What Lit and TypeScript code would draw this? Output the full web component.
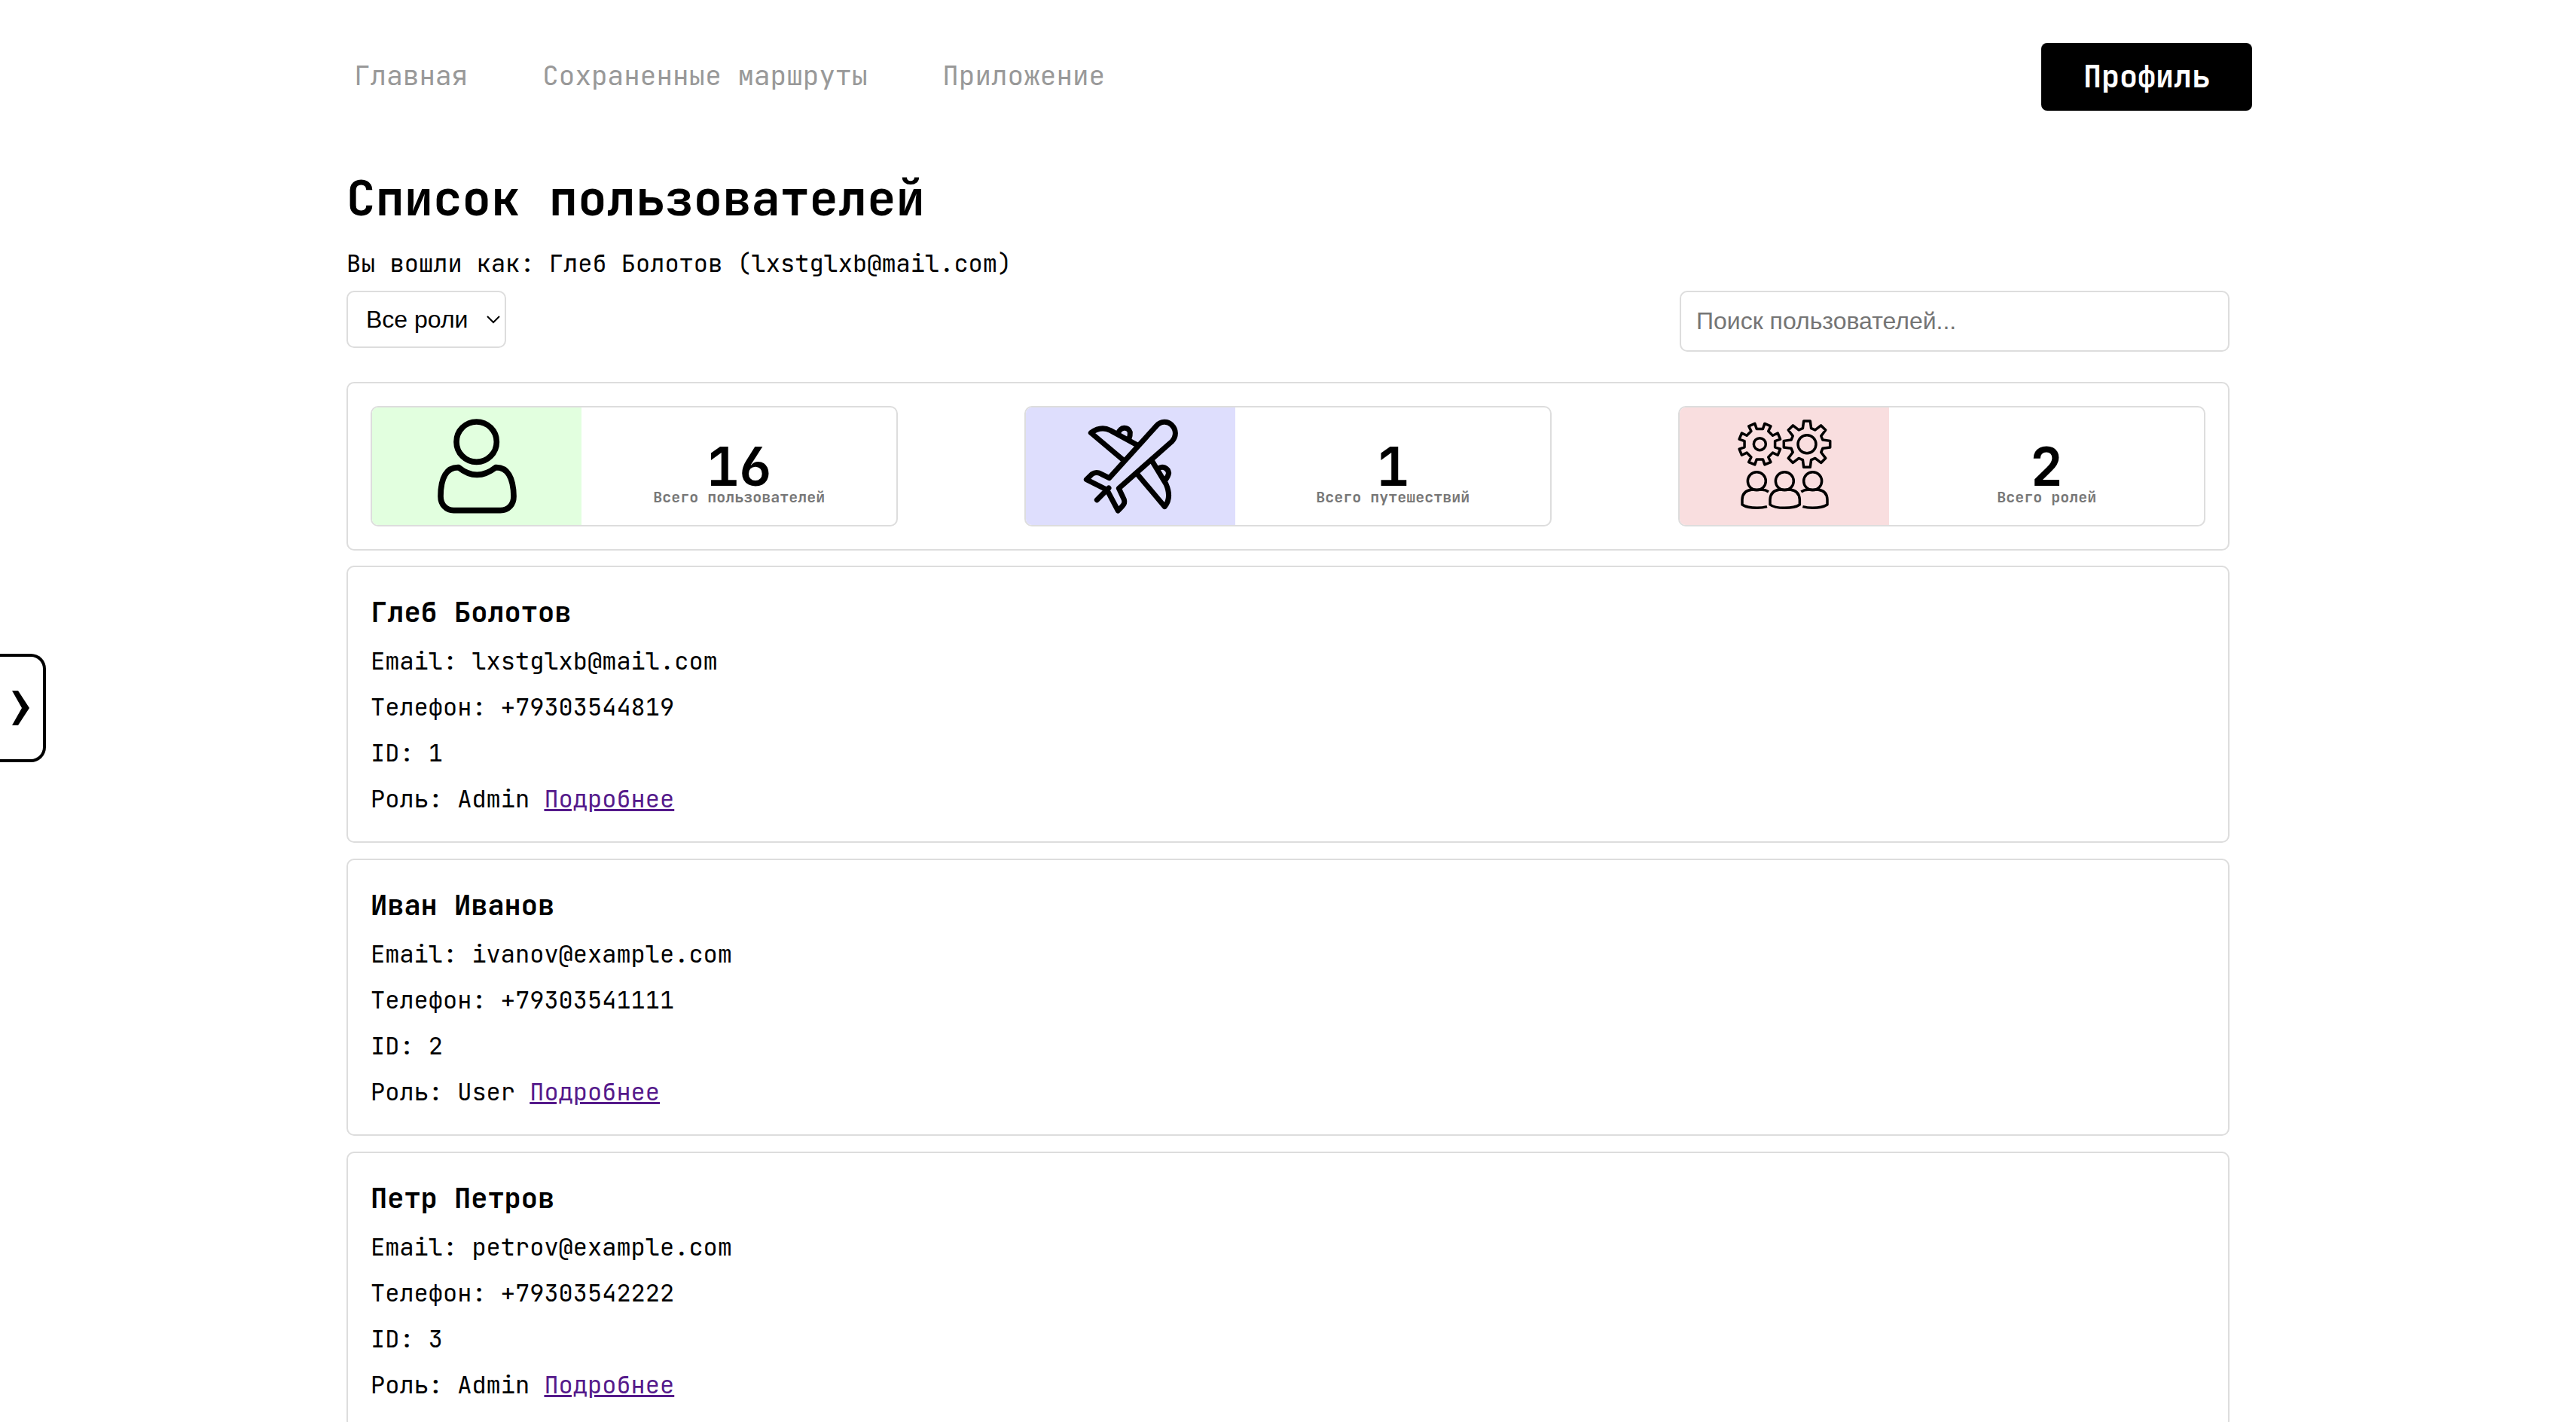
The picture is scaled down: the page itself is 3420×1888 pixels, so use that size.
import { LitElement, html, css, svg } from "lit";
import { customElement, property, state } from "lit/decorators.js";

interface User {
  id: number;
  name: string;
  email: string;
  phone: string;
  role: string;
}

const USERS: User[] = [
  { id: 1, name: "Глеб Болотов", email: "lxstglxb@mail.com", phone: "+79303544819", role: "Admin" },
  { id: 2, name: "Иван Иванов", email: "ivanov@example.com", phone: "+79303541111", role: "User" },
  { id: 3, name: "Петр Петров", email: "petrov@example.com", phone: "+79303542222", role: "Admin" },
];

/** Outline of a cog: each tooth is a trapezoid between the inner and outer radius. */
function gear(
  cx: number,
  cy: number,
  inner: number,
  outer: number,
  baseHalf: number,
  topHalf: number,
  start: number
): string {
  const points: string[] = [];
  const add = (r: number, deg: number) => {
    const a = (deg * Math.PI) / 180;
    points.push(`${(cx + r * Math.sin(a)).toFixed(1)} ${(cy - r * Math.cos(a)).toFixed(1)}`);
  };
  for (let i = 0; i < 8; i++) {
    const mid = start + i * 45;
    add(inner, mid - baseHalf);
    add(outer, mid - topHalf);
    add(outer, mid + topHalf);
    add(inner, mid + baseHalf);
  }
  return `M${points.join("L")}Z`;
}

const personIcon = html`
  <svg viewBox="0 1 408 408" aria-hidden="true">
    <g fill="none" stroke="#000" stroke-width="23" stroke-linejoin="round">
      <circle cx="203" cy="108" r="80"></circle>
      <path
        d="M132 210C84 208 60 250 60 325C60 358 82 381 112 381H298C330 381 351 358 351 325C350 250 326 208 279 210Q204 268 132 210Z"
      ></path>
    </g>
  </svg>
`;

const planeIcon = html`
  <svg viewBox="3 1 408 408" aria-hidden="true">
    <g fill="none" stroke="#000" stroke-width="21" stroke-linejoin="round" stroke-linecap="round">
      <path
        d="M122 252L310 44C328 25 354 24 370 40C390 60 390 86 372 106L160 293L181 338C185 352 182 358 157 382L113 299L31 258L54 236C64 229 76 228 90 236Z"
      ></path>
      <path d="M120 292L73 339"></path>
      <path d="M180 182L49 72C74 54 98 48 126 62L232 120"></path>
      <path d="M158 74C164 48 198 45 205 70C206 82 204 88 200 98"></path>
      <path d="M235 238L343 366C364 340 362 308 348 276L290 180"></path>
      <path d="M318 214C334 202 356 212 359 232C357 246 352 252 344 262"></path>
    </g>
  </svg>
`;

const rolesIcon = html`
  <svg viewBox="3 1 408 408" aria-hidden="true">
    <g fill="none" stroke="#000" stroke-width="10.5" stroke-linejoin="round">
      ${svg`
        <path d=${gear(109, 117, 62, 84, 11, 9, 22.5)}></path>
        <path d=${gear(297, 117, 65, 93, 15, 8, 0)}></path>
      `}
      <circle cx="109" cy="117" r="24"></circle>
      <circle cx="297" cy="117" r="36"></circle>
      <circle cx="97" cy="264" r="36"></circle>
      <circle cx="208" cy="264" r="36"></circle>
      <circle cx="320" cy="264" r="36"></circle>
      <path d="M144 307Q132 299 118 299H76Q40 303 39 338V358Q58 371 98 371Q120 371 138 366"></path>
      <path
        d="M150 358V338Q152 303 186 299H232Q266 303 268 338V358Q250 371 208 371Q166 371 150 358Z"
      ></path>
      <path d="M274 307Q286 299 300 299H342Q377 303 378 338V358Q358 371 320 371Q298 371 280 366"></path>
    </g>
  </svg>
`;

@customElement("stat-card")
export class StatCard extends LitElement {
  @property({ type: Number }) value = 0;
  @property() label = "";
  @property() tone = "green";
  @property({ attribute: false }) icon: unknown = null;

  static styles = css`
    :host {
      display: block;
      flex: 0 1 700px;
    }
    .card {
      display: flex;
      height: 160px;
      box-sizing: border-box;
      border: 2px solid #ddd;
      border-radius: 10px;
      overflow: hidden;
    }
    .picture {
      flex: 0 0 40%;
      display: flex;
      align-items: center;
      justify-content: center;
    }
    .picture svg {
      width: 136px;
      height: 136px;
    }
    .green {
      background: #e2ffdf;
    }
    .violet {
      background: #dedefd;
    }
    .pink {
      background: #f9dedf;
    }
    .figures {
      flex: 1;
      display: flex;
      flex-direction: column;
      align-items: center;
      justify-content: center;
      padding-top: 28px;
      font-weight: 700;
    }
    .value {
      font-size: 72px;
      line-height: 54px;
    }
    .label {
      font-size: 20px;
      line-height: 26px;
      color: #777;
    }
  `;

  render() {
    return html`
      <div class="card">
        <div class="picture ${this.tone}">${this.icon}</div>
        <div class="figures">
          <span class="value">${this.value}</span>
          <span class="label">${this.label}</span>
        </div>
      </div>
    `;
  }
}

@customElement("user-card")
export class UserCard extends LitElement {
  @property({ attribute: false }) user!: User;

  static styles = css`
    :host {
      display: block;
    }
    .card {
      display: flex;
      flex-direction: column;
      gap: 20px;
      padding: 36px 30px;
      border: 2px solid #ddd;
      border-radius: 10px;
    }
    .name {
      margin: 0;
      font-size: 37px;
      line-height: 48px;
      font-weight: 700;
    }
    .line {
      margin: 0;
      font-size: 32px;
      line-height: 41px;
    }
    .more {
      color: #551a8b;
    }
  `;

  render() {
    const u = this.user;
    return html`
      <article class="card">
        <h3 class="name">${u.name}</h3>
        <p class="line">Email: ${u.email}</p>
        <p class="line">Телефон: ${u.phone}</p>
        <p class="line">ID: ${u.id}</p>
        <p class="line">Роль: ${u.role} <a class="more" href="#user-${u.id}">Подробнее</a></p>
      </article>
    `;
  }
}

@customElement("app-root")
export class AppRoot extends LitElement {
  @state() private role = "";
  @state() private query = "";

  static styles = css`
    :host {
      display: block;
      background: #fff;
      color: #000;
      font-family: "JetBrains Mono", "DejaVu Sans Mono", monospace;
      font-size: 32px;
      line-height: 42px;
    }
    .header {
      display: flex;
      align-items: center;
      justify-content: space-between;
      max-width: 2560px;
      margin: 0 auto;
      padding: 57px 0 74px;
    }
    .nav {
      display: flex;
      gap: 99px;
      padding: 0 0 4px 40px;
      font-size: 36px;
    }
    .nav a {
      color: #999;
      text-decoration: none;
    }
    .profile {
      height: 90px;
      padding: 0 56px;
      border: 0;
      border-radius: 8px;
      background: #000;
      color: #fff;
      font: inherit;
      font-size: 40px;
      font-weight: 700;
      cursor: pointer;
    }
    .main {
      max-width: 2500px;
      margin: 0 auto;
    }
    .title {
      margin: 0 0 24px;
      font-size: 64px;
      line-height: 84px;
      font-weight: 700;
    }
    .signed {
      margin: 0 0 15px;
    }
    .controls {
      display: flex;
      align-items: flex-start;
      justify-content: space-between;
      margin-bottom: 40px;
      font-family: "Liberation Sans", Arial, sans-serif;
    }
    .picker {
      display: grid;
      align-items: center;
    }
    .picker select,
    .picker svg {
      grid-area: 1 / 1;
    }
    .picker select {
      width: 212px;
      height: 76px;
      padding: 0 24px;
      border: 2px solid #ddd;
      border-radius: 10px;
      appearance: none;
      background: #fff;
      color: #000;
      font: inherit;
    }
    .picker svg {
      width: 18px;
      height: 12px;
      margin-right: 8px;
      justify-self: end;
      pointer-events: none;
    }
    .search {
      box-sizing: border-box;
      width: 730px;
      height: 81px;
      padding: 0 20px;
      border: 2px solid #ddd;
      border-radius: 10px;
      color: #000;
      font: inherit;
    }
    .search::placeholder {
      color: #757575;
    }
    .stats {
      display: flex;
      justify-content: space-between;
      gap: 20px;
      margin-bottom: 20px;
      padding: 30px;
      border: 2px solid #ddd;
      border-radius: 10px;
    }
    .list {
      display: flex;
      flex-direction: column;
      gap: 21px;
    }
    .drawer {
      position: fixed;
      left: 0;
      top: 868px;
      display: flex;
      align-items: center;
      width: 61px;
      height: 144px;
      padding: 0 0 0 16px;
      border: 4px solid #000;
      border-left: 0;
      border-radius: 0 20px 20px 0;
      background: #fff;
      cursor: pointer;
    }
    .drawer svg {
      width: 24px;
      height: 46px;
    }
  `;

  private get visible(): User[] {
    const q = this.query.trim().toLowerCase();
    return USERS.filter(
      (u) =>
        (!this.role || u.role === this.role) &&
        (!q || u.name.toLowerCase().includes(q) || u.email.toLowerCase().includes(q))
    );
  }

  private onRole(e: Event) {
    this.role = (e.target as HTMLSelectElement).value;
  }

  private onSearch(e: Event) {
    this.query = (e.target as HTMLInputElement).value;
  }

  render() {
    return html`
      <header class="header">
        <nav class="nav">
          <a href="#home">Главная</a>
          <a href="#routes">Сохраненные маршруты</a>
          <a href="#app">Приложение</a>
        </nav>
        <button class="profile" type="button">Профиль</button>
      </header>

      <main class="main">
        <h1 class="title">Список пользователей</h1>
        <p class="signed">Вы вошли как: Глеб Болотов (lxstglxb@mail.com)</p>

        <div class="controls">
          <div class="picker">
            <select aria-label="Роль" @change=${this.onRole}>
              <option value="">Все роли</option>
              <option value="Admin">Admin</option>
              <option value="User">User</option>
            </select>
            <svg viewBox="0 0 18 12" aria-hidden="true">
              <path d="M1 2L9 10L17 2" fill="none" stroke="#000" stroke-width="2"></path>
            </svg>
          </div>
          <input
            class="search"
            type="text"
            aria-label="Поиск пользователей"
            placeholder="Поиск пользователей..."
            @input=${this.onSearch}
          />
        </div>

        <section class="stats">
          <stat-card .value=${16} label="Всего пользователей" tone="green" .icon=${personIcon}></stat-card>
          <stat-card .value=${1} label="Всего путешествий" tone="violet" .icon=${planeIcon}></stat-card>
          <stat-card .value=${2} label="Всего ролей" tone="pink" .icon=${rolesIcon}></stat-card>
        </section>

        <section class="list">
          ${this.visible.map((u) => html`<user-card .user=${u}></user-card>`)}
        </section>
      </main>

      <button class="drawer" type="button" aria-label="Открыть меню">
        <svg viewBox="0 0 24 46" aria-hidden="true">
          <path d="M0 0H8L23 23L8 46H0L13 23Z" fill="#000"></path>
        </svg>
      </button>
    `;
  }
}
